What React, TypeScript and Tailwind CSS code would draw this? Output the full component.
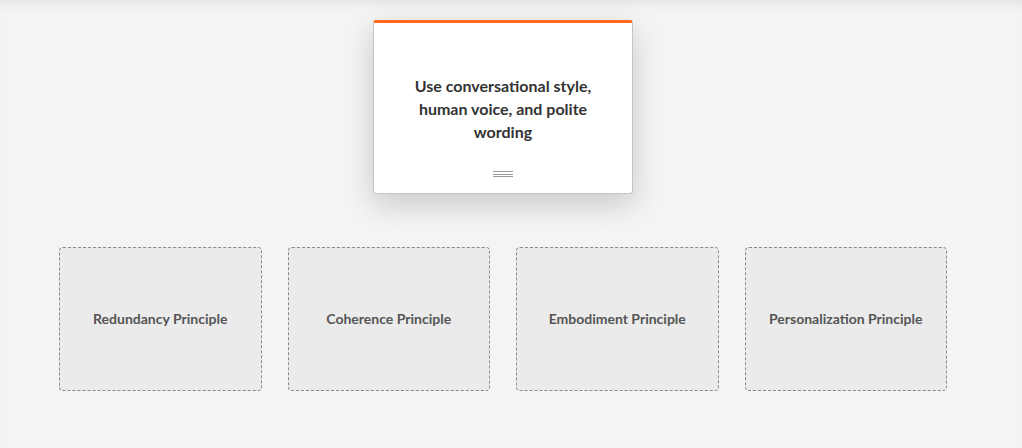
const principles = [
  'Redundancy Principle',
  'Coherence Principle',
  'Embodiment Principle',
  'Personalization Principle',
];

export default function App() {
  return (
    <div
      className="min-h-[448px] bg-[#f4f4f4] shadow-[inset_0_10px_12px_-8px_rgba(0,0,0,0.09)]"
      style={{ fontFamily: 'Lato, "Open Sans", sans-serif' }}
    >
      <div className="ml-[59px] flex w-[888px] flex-col items-center pt-[20px]">
        <div className="relative flex h-[174px] w-[260px] flex-col items-center rounded-[3px] border border-[#c4c4c4] border-t-[3px] border-t-[#ff6a1f] bg-white shadow-[0_10px_30px_rgba(0,0,0,0.18)]">
          <p className="mt-[51px] px-8 text-center text-[16px] font-bold leading-[23px] text-[#333]">
            Use conversational style, human voice, and polite wording
          </p>
          <div className="absolute bottom-[16px] left-1/2 flex w-[20px] -translate-x-1/2 flex-col gap-[1.5px]">
            <span className="h-px bg-[#999]" />
            <span className="h-px bg-[#999]" />
            <span className="h-px bg-[#999]" />
          </div>
        </div>

        <div className="mt-[53px] grid w-full grid-cols-4 gap-[26px]">
          {principles.map((p) => (
            <div
              key={p}
              className="flex h-[144px] items-center justify-center rounded-[4px] border border-dashed border-[#8a8a8a] bg-[#ebebeb] pb-[2px]"
            >
              <span className="text-[14px] font-bold text-[#555]">{p}</span>
            </div>
          ))}
        </div>
      </div>
    </div>
  );
}
